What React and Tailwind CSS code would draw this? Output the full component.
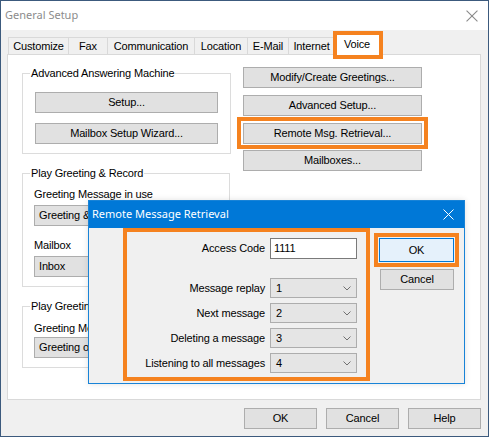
import React from "react";

const Chevron = () => (
  <svg width="8" height="5" viewBox="0 0 8 5" className="shrink-0">
    <path d="M0.5 0.5 L4 4 L7.5 0.5" fill="none" stroke="#707070" strokeWidth="1" />
  </svg>
);

const CloseX = ({ color, size = 11 }) => (
  <svg width={size} height={size} viewBox="0 0 11 11">
    <path d="M0.5 0.5 L10.5 10.5 M10.5 0.5 L0.5 10.5" stroke={color} strokeWidth="1" fill="none" />
  </svg>
);

function Btn({ children, className = "" }) {
  return (
    <div
      className={
        "flex items-center justify-center bg-[#e1e1e1] border border-[#adadad] text-black " +
        className
      }
    >
      {children}
    </div>
  );
}

function Tab({ label, w }) {
  return (
    <div
      className="h-[17px] flex items-center justify-center border-t border-l border-[#d9d9d9] bg-[#f0f0f0]"
      style={{ width: w }}
    >
      {label}
    </div>
  );
}

function GrayDrop({ text }) {
  return (
    <div className="h-[21px] w-[184px] bg-[#e1e1e1] border border-[#adadad] flex items-center pl-[4px] overflow-hidden whitespace-nowrap">
      {text}
    </div>
  );
}

function ModalSelect({ value }) {
  return (
    <div className="h-[20px] w-[87px] bg-[#e5e5e5] border border-[#adadad] flex items-center justify-between pl-[5px] pr-[5px]">
      <span>{value}</span>
      <Chevron />
    </div>
  );
}

export default function App() {
  return (
    <div className="w-[489px] h-[437px] relative border border-[#3c5a7d] bg-[#f0f0f0] flex flex-col text-[11px] tracking-[-0.15px] text-black font-['Liberation_Sans',Arial,sans-serif] overflow-hidden">
      {/* title bar */}
      <div className="h-[29px] bg-white flex items-center justify-between pl-[4px] pr-[10px] shrink-0">
        <span className="font-['Noto_Sans',sans-serif] text-[11px] tracking-normal text-[#8c8c8c]">
          General Setup
        </span>
        <CloseX color="#8a8a8a" size={12} />
      </div>

      {/* tabs */}
      <div className="flex items-end h-[24px] pl-[7px] shrink-0">
        <Tab label="Customize" w={60} />
        <Tab label="Fax" w={39} />
        <Tab label="Communication" w={87} />
        <Tab label="Location" w={53} />
        <Tab label="E-Mail" w={41} />
        <Tab label="Internet" w={46} />
        <div className="relative z-10 h-[20px] w-[46px] -mb-[1px] bg-white flex items-start justify-center pt-[1px]">
          Voice
          <div className="absolute -left-[1px] -right-[3px] -top-[4px] -bottom-[4px] border-[4px] border-[#f5821f]" />
        </div>
      </div>

      {/* panel */}
      <div className="ml-[6px] w-[474px] h-[346px] bg-white border border-[#d9d9d9] flex pl-[14px] pt-[12px] shrink-0">
        {/* left column */}
        <div className="w-[207px] flex flex-col gap-[13px]">
          <fieldset className="h-[87px] border border-[#dcdcdc] px-[12px]">
            <legend className="-ml-[5px] px-[1px] leading-[13px]">Advanced Answering Machine</legend>
            <div className="flex flex-col gap-[10px] mt-[12px]">
              <Btn className="w-[183px] h-[21px]">Setup...</Btn>
              <Btn className="w-[183px] h-[21px]">Mailbox Setup Wizard...</Btn>
            </div>
          </fieldset>
          <fieldset className="h-[120px] border border-[#dcdcdc] px-[11px]">
            <legend className="-ml-[4px] px-[1px] leading-[13px]">Play Greeting &amp; Record</legend>
            <div className="mt-[8px] leading-[13px] mb-[4px]">Greeting Message in use</div>
            <GrayDrop text="Greeting & Record" />
            <div className="mt-[13px] leading-[13px] mb-[4px]">Mailbox</div>
            <GrayDrop text="Inbox" />
          </fieldset>
          <fieldset className="h-[68px] border border-[#dcdcdc] px-[11px]">
            <legend className="-ml-[4px] px-[1px] leading-[13px]">Play Greeting only</legend>
            <div className="mt-[9px] leading-[13px] mb-[2px]">Greeting Message in use</div>
            <GrayDrop text="Greeting only" />
          </fieldset>
        </div>

        {/* right column */}
        <div className="ml-[14px] w-[179px] flex flex-col">
          <Btn className="h-[21px]">Modify/Create Greetings...</Btn>
          <Btn className="h-[21px] mt-[7px]">Advanced Setup...</Btn>
          <div className="relative mt-[7px]">
            <Btn className="h-[21px]">Remote Msg. Retrieval...</Btn>
            <div className="absolute -left-[6px] -right-[6px] -top-[6px] -bottom-[5px] border-[4px] border-[#f5821f]" />
          </div>
          <Btn className="h-[21px] mt-[6px]">Mailboxes...</Btn>
        </div>
      </div>

      {/* bottom buttons */}
      <div className="flex justify-end gap-[9px] pr-[7px] mt-[8px]">
        <Btn className="w-[73px] h-[21px]">OK</Btn>
        <Btn className="w-[73px] h-[21px]">Cancel</Btn>
        <Btn className="w-[73px] h-[21px]">Help</Btn>
      </div>

      {/* modal dialog */}
      <div className="absolute left-[87px] top-[199px] w-[377px] h-[184px] border border-[#1883d7] bg-[#f0f0f0] flex flex-col shadow-[0_0_6px_rgba(0,0,0,0.12)]">
        <div className="h-[27px] bg-[#0078d7] flex items-center justify-between pl-[3px] pr-[10px] shrink-0">
          <span className="font-['Noto_Sans',sans-serif] text-[11px] tracking-normal text-white">
            Remote Message Retrieval
          </span>
          <CloseX color="#ffffff" size={11} />
        </div>
        <div className="flex items-start pl-[34px]">
          {/* orange fields box */}
          <div className="w-[247px] h-[153px] border-[4px] border-[#f5821f] flex flex-col pt-[6px] pr-[9px]">
            <div className="flex items-center justify-end gap-[5px]">
              <span>Access Code</span>
              <div className="w-[87px] h-[21px] bg-white border border-[#7a7a7a] flex items-center pl-[3px]">
                1111
              </div>
            </div>
            <div className="flex flex-col gap-[5px] mt-[19px]">
              {[
                ["Message replay", "1"],
                ["Next message", "2"],
                ["Deleting a message", "3"],
                ["Listening to all messages", "4"],
              ].map(([l, v]) => (
                <div key={l} className="flex items-center justify-end gap-[5px]">
                  <span>{l}</span>
                  <ModalSelect value={v} />
                </div>
              ))}
            </div>
          </div>
          {/* right buttons */}
          <div className="ml-[4px] mt-[5px] flex flex-col">
            <div className="border-[4px] border-[#f5821f] p-[1px]">
              <div className="w-[75px] h-[24px] bg-[#e5f1fb] border border-[#0078d7] flex items-center justify-center">
                OK
              </div>
            </div>
            <Btn className="ml-[6px] mt-[2px] w-[74px] h-[21px]">Cancel</Btn>
          </div>
        </div>
      </div>
    </div>
  );
}
